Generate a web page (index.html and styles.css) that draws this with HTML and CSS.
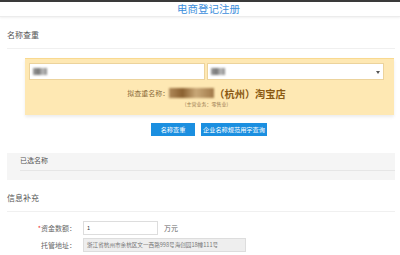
FILE: index.html
```html
<!DOCTYPE html>
<html>
<head>
<meta charset="utf-8">
<link rel="stylesheet" href="styles.css">
</head>
<body>
<div class="header"><span class="title">电商登记注册</span></div>

<div class="sec-title">名称查重</div>

<div class="yellow">
  <div class="inputs">
    <div class="inp left"><span class="blur b1"></span></div>
    <div class="inp right"><span class="blur b2"></span><span class="caret"></span></div>
  </div>
  <div class="nameline">
    <span class="lbl">拟查重名称：</span><span class="blur b3"></span><span class="big">（杭州）淘宝店</span>
  </div>
  <div class="sub">(主营业务：零售业)</div>
</div>

<div class="btns">
  <span class="btn b-a">名称查重</span>
  <span class="btn b-b">企业名称规范用字查询</span>
</div>

<div class="panel">
  <div class="panel-title">已选名称</div>
</div>

<div class="sec-title info">信息补充</div>

<div class="form">
  <div class="row">
    <span class="flabel"><em>*</em>资金数额：</span>
    <span class="field f1">1</span>
    <span class="unit">万元</span>
  </div>
  <div class="row">
    <span class="flabel">托管地址：</span>
    <span class="field f2">浙江省杭州市余杭区文一西路998号海创园18幢111号</span>
  </div>
</div>
</body>
</html>
```

FILE: styles.css
```css
* { box-sizing: border-box; }
body {
  margin: 0;
  background: #fff;
  font-family: "Noto Sans CJK SC", "Noto Sans", sans-serif;
  color: #555;
  width: 400px;
  height: 255px;
  overflow: hidden;
}
.header {
  border-top: 2px solid #3a3a3a;
  height: 17px;
  border-bottom: 1px solid #ececec;
  box-shadow: 0 1px 2px rgba(0,0,0,0.06);
  display: flex;
  justify-content: center;
  padding-left: 17px;
}
.title {
  font-size: 10.5px;
  line-height: 13px;
  color: #3d8fdc;
  letter-spacing: 0;
}
.sec-title {
  margin: 0 5px 0 7px;
  padding: 14px 0 9px;
  font-size: 8px;
  line-height: 8px;
  color: #555;
  border-bottom: 1px solid #f0f0f0;
}
.yellow {
  margin: 9px 6px 0 25px;
  height: 57px;
  background: #fee8b3;
  border-top: 1px solid #f9d98f;
  box-shadow: 0 2px 3px rgba(0,0,0,0.08);
  padding: 4px 10px 0 4px;
}
.inputs {
  display: flex;
  gap: 2px;
}
.inp {
  height: 17px;
  background: #fff;
  border: 1px solid #ecd39c;
  display: flex;
  align-items: center;
  padding-left: 3px;
}
.inp.left { width: 176px; }
.inp.right { flex: 1; position: relative; }
.blur {
  display: inline-block;
  background: linear-gradient(90deg, #9a9a9a, #777 40%, #bbb 70%, #888);
  filter: blur(0.8px);
}
.b1 { width: 14px; height: 7px; }
.b2 { width: 14px; height: 7px; }
.caret {
  position: absolute;
  right: 3px;
  top: 7px;
  width: 0; height: 0;
  border-left: 2.5px solid transparent;
  border-right: 2.5px solid transparent;
  border-top: 3px solid #555;
}
.nameline {
  display: flex;
  align-items: center;
  justify-content: center;
  margin-top: 6px;
  height: 14px;
}
.lbl {
  font-size: 7px;
  color: #8a6a3a;
}
.b3 {
  width: 45px;
  height: 10px;
  background: linear-gradient(90deg, #b08a5a, #8a6030 30%, #c9a878 60%, #a07848);
}
.big {
  font-size: 10.2px;
  font-weight: bold;
  color: #8b5a14;
}
.sub {
  text-align: center;
  font-size: 5px;
  line-height: 7px;
  color: #9a7a50;
  margin-top: 0;
}
.btns {
  display: flex;
  justify-content: center;
  gap: 6px;
  margin-top: 8px;
  padding-left: 18px;
}
.btn {
  height: 13px;
  background: #1b8fe0;
  color: #fff;
  font-size: 6.2px;
  line-height: 13px;
  text-align: center;
}
.b-a { width: 44px; }
.b-b { width: 66px; }
.panel {
  margin: 17px 5px 0 7px;
  height: 27px;
  background: #f5f5f5;
  padding: 3px 0 0 13px;
}
.panel-title {
  font-size: 7px;
  line-height: 9px;
  padding-bottom: 5px;
  color: #555;
  border-bottom: 1px solid #e6e6e6;
}
.info { padding-top: 14px; }
.form {
  padding-top: 9px;
}
.row {
  display: flex;
  align-items: center;
  height: 14px;
  margin-bottom: 3px;
}
.flabel {
  width: 79px;
  text-align: right;
  font-size: 7px;
  color: #666;
  padding-right: 3px;
}
.flabel em { color: #e33; font-style: normal; }
.field {
  height: 14px;
  font-size: 5.6px;
  line-height: 12px;
  border: 1px solid #ddd;
  padding-left: 3px;
  color: #333;
}
.f1 { width: 75px; margin-left: 4px; background: #fff; }
.f2 { width: 163px; margin-left: 4px; background: #eeeeee; color: #777; }
.unit { font-size: 7px; margin-left: 6px; color: #666; }
```
